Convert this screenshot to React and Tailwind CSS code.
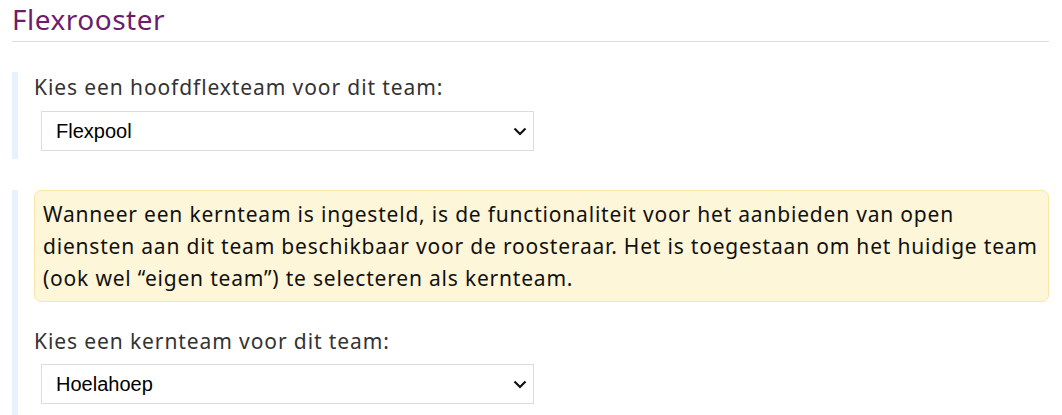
import React from "react";

function Chevron() {
  return (
    <svg width="14" height="9" viewBox="0 0 14 9" className="shrink-0">
      <path d="M1.5 1.5 L7 7 L12.5 1.5" fill="none" stroke="#111" strokeWidth="2.2" />
    </svg>
  );
}

function Select({ value }) {
  return (
    <div className="ml-[7px] flex h-[40px] w-[493px] items-center justify-between border border-[#dcdcdc] bg-white pl-[14px] pr-[6px]">
      <span className="text-[20px] tracking-normal text-black" style={{ fontFamily: '"Liberation Sans", Arial, sans-serif' }}>{value}</span>
      <Chevron />
    </div>
  );
}

export default function App() {
  return (
    <div className="bg-white pl-[12px] pr-[13px]" style={{ fontFamily: '"Noto Sans", sans-serif' }}>
      <h2 className="border-b border-[#dddddd] pb-[4px] pt-[1px] text-[28px] leading-[36px] tracking-[0.5px] text-[#6c1d6c]">Flexrooster</h2>
      <div className="mt-[30px] border-l-[6px] border-[#e8f2fe] pb-[8px] pl-[16px]">
        <div className="text-[21px] leading-[30px] tracking-[0.9px] text-[#333]">Kies een hoofdflexteam voor dit team:</div>
        <div className="mt-[9px]">
          <Select value="Flexpool" />
        </div>
      </div>
      <div className="mt-[31px] border-l-[6px] border-[#e8f2fe] pb-[12px] pl-[16px]">
        <div className="whitespace-nowrap rounded-[7px] border border-[#fbe6a6] bg-[#fef6d8] px-[8px] py-[7px] text-[21px] leading-[32px] tracking-[0.8px] text-[#111]">
          Wanneer een kernteam is ingesteld, is de functionaliteit voor het aanbieden van open
          <br />
          diensten aan dit team beschikbaar voor de roosteraar. Het is toegestaan om het huidige team
          <br />
          (ook wel “eigen team”) te selecteren als kernteam.
        </div>
        <div className="mt-[24px] text-[21px] leading-[30px] tracking-[0.9px] text-[#333]">Kies een kernteam voor dit team:</div>
        <div className="mt-[8px]">
          <Select value="Hoelahoep" />
        </div>
      </div>
    </div>
  );
}
